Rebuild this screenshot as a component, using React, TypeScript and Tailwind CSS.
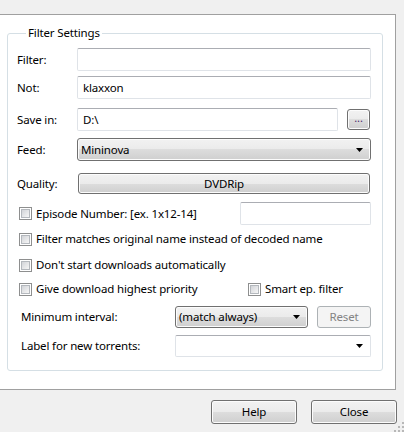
import React from 'react';

const btn =
  'border border-[#707070] rounded-[3px] bg-[linear-gradient(to_bottom,#f2f2f2_0%,#ebebeb_50%,#dddddd_50%,#cfcfcf_100%)] shadow-[inset_0_0_0_1px_#fcfcfc]';
const field =
  'border border-[#dfe3e8] border-t-[#abadb3] rounded-[2px] bg-white';

function Arrow() {
  return (
    <svg width="7" height="4" viewBox="0 0 7 4">
      <path d="M0 0h7L3.5 4z" fill="#000" />
    </svg>
  );
}

function Check({ label }: { label: string }) {
  return (
    <div className="flex items-center h-[16px]">
      <div className="w-[13px] h-[13px] border border-[#8e8f8f] bg-white p-[1px]">
        <div className="w-full h-full border border-[#b4b8bd] bg-[linear-gradient(135deg,#d2d4d8,#f6f6f6)]" />
      </div>
      <span className="ml-[4px] whitespace-nowrap">{label}</span>
    </div>
  );
}

export default function App() {
  return (
    <div
      className="relative w-[404px] h-[432px] overflow-hidden bg-[#f0f0f0] text-[11.5px] tracking-[-0.15px] leading-[16px] text-black"
      style={{ fontFamily: '"Noto Sans", sans-serif' }}
    >
      {/* main panel */}
      <div className="mt-[14px] w-[396px] h-[376px] bg-white border-t border-r border-b border-[#a0a0a0] pl-[7px] pt-[10px]">
        <fieldset className="w-[376px] h-[346px] border border-[#d5dfe5] rounded-[3px] pl-[9px]">
          <legend className="ml-[9px] px-[2px]">Filter Settings</legend>

          <div className="flex items-center h-[23px] mt-[7px]">
            <span className="w-[60px]">Filter:</span>
            <div className={`${field} w-[294px] h-[23px]`} />
          </div>

          <div className="flex items-center h-[23px] mt-[5px]">
            <span className="w-[60px]">Not:</span>
            <div className={`${field} w-[294px] h-[23px] flex items-center px-[5px]`}>
              klaxxon
            </div>
          </div>

          <div className="flex items-center h-[23px] mt-[9px]">
            <span className="w-[60px]">Save in:</span>
            <div className={`${field} w-[261px] h-[23px] flex items-center px-[5px]`}>
              D:\
            </div>
            <button className={`${btn} ml-[9px] w-[23px] h-[21px] flex items-center justify-center text-[11px] pb-[3px] text-[#4b2a6b]`}>
              ...
            </button>
          </div>

          <div className="flex items-center h-[23px] mt-[7px]">
            <span className="w-[60px]">Feed:</span>
            <div className={`${btn} w-[294px] h-[23px] flex items-center justify-between pl-[3px] pr-[7px]`}>
              <span>Mininova</span>
              <Arrow />
            </div>
          </div>

          <div className="flex items-center h-[21px] mt-[12px]">
            <span className="w-[61px]">Quality:</span>
            <button className={`${btn} w-[292px] h-[21px] flex items-center justify-center`}>
              DVDRip
            </button>
          </div>

          <div className="flex items-center h-[23px] mt-[8px] pl-[2px]">
            <div className="w-[221px]">
              <Check label="Episode Number: [ex. 1x12-14]" />
            </div>
            <div className={`${field} w-[131px] h-[23px]`} />
          </div>

          <div className="mt-[6px] pl-[2px]">
            <Check label="Filter matches original name instead of decoded name" />
          </div>

          <div className="mt-[10px] pl-[2px]">
            <Check label="Don't start downloads automatically" />
          </div>

          <div className="flex mt-[8px] pl-[2px]">
            <div className="w-[229px]">
              <Check label="Give download highest priority" />
            </div>
            <Check label="Smart ep. filter" />
          </div>

          <div className="flex items-center h-[22px] mt-[9px] pl-[4px]">
            <span className="w-[154px]">Minimum interval:</span>
            <div className={`${btn} w-[133px] h-[22px] flex items-center justify-between pl-[3px] pr-[7px]`}>
              <span>(match always)</span>
              <Arrow />
            </div>
            <button className="ml-[9px] w-[54px] h-[22px] border border-[#adb2b5] rounded-[3px] bg-[#f4f4f4] text-[#838383] flex items-center justify-center">
              Reset
            </button>
          </div>

          <div className="flex items-center h-[22px] mt-[7px] pl-[4px]">
            <span className="w-[154px]">Label for new torrents:</span>
            <div className={`${field} w-[196px] h-[22px] flex items-center justify-end pr-[7px]`}>
              <Arrow />
            </div>
          </div>
        </fieldset>
      </div>

      {/* dialog buttons */}
      <div className="flex gap-[14px] ml-[211px] mt-[10px]">
        <button className={`${btn} w-[86px] h-[24px] flex items-center justify-center`}>Help</button>
        <button className={`${btn} w-[86px] h-[24px] flex items-center justify-center`}>Close</button>
      </div>

      {/* size grip */}
      <svg className="absolute right-0 bottom-0" width="12" height="12" viewBox="0 0 12 12">
        {[[10, 10], [10, 6], [6, 10], [10, 2], [6, 6], [2, 10]].map(([x, y], i) => (
          <rect key={i} x={x} y={y} width="2" height="2" fill="#b8b8b8" />
        ))}
      </svg>
    </div>
  );
}
